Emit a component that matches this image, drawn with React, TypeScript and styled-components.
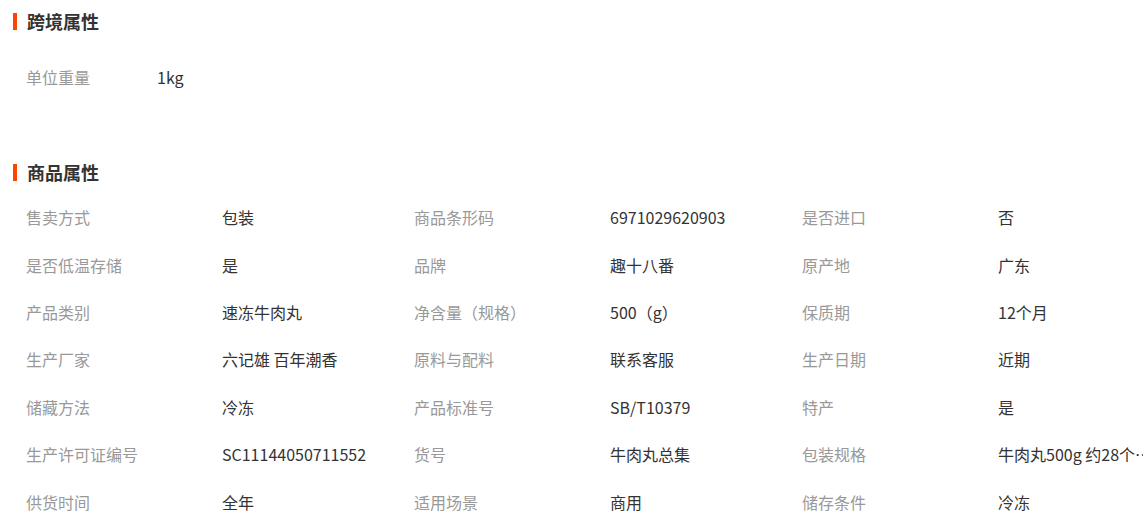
import React from "react";
import styled, { createGlobalStyle } from "styled-components";

const Global = createGlobalStyle`
  html, body { margin: 0; padding: 0; background: #fff; overflow: hidden; }
  body { font-family: "Noto Sans CJK SC", "Noto Sans", sans-serif; }
`;

const Page = styled.div`
  width: 1190px;
  display: flex;
  flex-direction: column;
`;

const Heading = styled.div<{ $top: number }>`
  display: flex;
  align-items: center;
  height: 18px;
  margin-top: ${(p) => p.$top}px;
  padding-left: 13px;
  font-size: 18px;
  font-weight: 700;
  color: #333;
  line-height: 18px;
`;

const Bar = styled.span`
  width: 4px;
  height: 17px;
  background: #ff4400;
  margin-right: 10px;
`;

const CrossList = styled.div`
  margin-top: 35px;
  padding-left: 26px;
  display: flex;
  flex-direction: column;
`;

const CrossRow = styled.div`
  display: flex;
  align-items: center;
  height: 24px;
  font-size: 16px;
`;

const Label = styled.span<{ $w: number }>`
  width: ${(p) => p.$w}px;
  flex: none;
  color: #999;
  white-space: nowrap;
`;

const Value = styled.span`
  color: #333;
  white-space: nowrap;
  overflow: hidden;
  text-overflow: ellipsis;
  max-width: 160px;
`;

const Grid = styled.div`
  margin-top: 12.5px;
  padding-left: 26px;
  display: grid;
  grid-template-columns: repeat(3, 388px);
  grid-auto-rows: 47.4px;
  font-size: 16px;
`;

const Cell = styled.div`
  display: flex;
  align-items: center;
  min-width: 0;
`;

const attrs: [string, string][] = [
  ["售卖方式", "包装"],
  ["商品条形码", "6971029620903"],
  ["是否进口", "否"],
  ["是否低温存储", "是"],
  ["品牌", "趣十八番"],
  ["原产地", "广东"],
  ["产品类别", "速冻牛肉丸"],
  ["净含量（规格）", "500（g）"],
  ["保质期", "12个月"],
  ["生产厂家", "六记雄 百年潮香"],
  ["原料与配料", "联系客服"],
  ["生产日期", "近期"],
  ["储藏方法", "冷冻"],
  ["产品标准号", "SB/T10379"],
  ["特产", "是"],
  ["生产许可证编号", "SC11144050711552"],
  ["货号", "牛肉丸总集"],
  ["包装规格", "牛肉丸500g 约28个左右"],
  ["供货时间", "全年"],
  ["适用场景", "商用"],
  ["储存条件", "冷冻"],
];

export default function App() {
  return (
    <Page>
      <Global />
      <Heading $top={12}>
        <Bar />
        跨境属性
      </Heading>
      <CrossList>
        <CrossRow>
          <Label $w={131}>单位重量</Label>
          <Value>1kg</Value>
        </CrossRow>
      </CrossList>
      <Heading $top={74}>
        <Bar />
        商品属性
      </Heading>
      <Grid>
        {attrs.map(([k, v], i) => (
          <Cell key={i}>
            <Label $w={196}>{k}</Label>
            <Value>{v}</Value>
          </Cell>
        ))}
      </Grid>
    </Page>
  );
}
